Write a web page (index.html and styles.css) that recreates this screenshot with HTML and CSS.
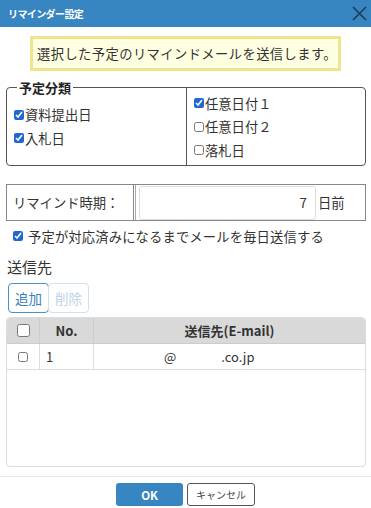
FILE: index.html
```html
<!DOCTYPE html>
<html lang="ja">
<head>
<meta charset="utf-8">
<title>リマインダー設定</title>
<link rel="stylesheet" href="styles.css">
</head>
<body>
<div class="dialog">
  <header class="titlebar">
    <span class="title">リマインダー設定</span>
    <svg class="close" width="15" height="15" viewBox="0 0 15 15"><path d="M1 1L14 14M14 1L1 14" stroke="#1b3a52" stroke-width="1.5" fill="none"/></svg>
  </header>
  <main class="content">
    <div class="notice">選択した予定のリマインドメールを送信します。</div>

    <fieldset class="category">
      <legend class="legend">予定分類</legend>
      <div class="cols">
        <div class="col col-left">
          <label class="opt"><input type="checkbox" class="cb" checked>資料提出日</label>
          <label class="opt"><input type="checkbox" class="cb" checked>入札日</label>
        </div>
        <div class="col col-right">
          <label class="opt"><input type="checkbox" class="cb" checked>任意日付１</label>
          <label class="opt"><input type="checkbox" class="cb">任意日付２</label>
          <label class="opt"><input type="checkbox" class="cb">落札日</label>
        </div>
      </div>
    </fieldset>

    <div class="remind">
      <div class="remind-label">リマインド時期：</div>
      <div class="remind-value">
        <div class="num-input">7</div>
        <span class="unit">日前</span>
      </div>
    </div>

    <label class="daily"><input type="checkbox" class="cb" checked>予定が対応済みになるまでメールを毎日送信する</label>

    <h3 class="section">送信先</h3>

    <div class="btns">
      <button class="tbtn">追加</button><button class="tbtn disabled">削除</button>
    </div>

    <div class="grid">
      <div class="grid-head">
        <div class="c c-check"><input type="checkbox" class="cb-big"></div>
        <div class="c c-no">No.</div>
        <div class="c c-mail">送信先(E-mail)</div>
      </div>
      <div class="grid-row">
        <div class="c c-check"><input type="checkbox" class="cb-row"></div>
        <div class="c c-no left">1</div>
        <div class="c c-mail mail"><span>@</span><span class="blank"></span><span>.co.jp</span></div>
      </div>
    </div>
  </main>
  <footer class="footer">
    <button class="btn-ok">OK</button>
    <button class="btn-cancel">キャンセル</button>
  </footer>
</div>
</body>
</html>
```

FILE: styles.css
```css
* { box-sizing: border-box; }
html, body { margin: 0; padding: 0; }
body {
  width: 371px;
  height: 508px;
  overflow: hidden;
  background: #fff;
  color: #333;
  font-family: "Noto Sans CJK JP", "Noto Sans", sans-serif;
}
.dialog { width: 371px; height: 508px; display: flex; flex-direction: column; }

.titlebar {
  height: 27px;
  background: #3886c1;
  display: flex;
  align-items: center;
  justify-content: space-between;
  padding: 0 4px 0 8px;
  color: #fff;
}
.title { font-size: 10px; font-weight: bold; letter-spacing: -0.6px; }
.close { display: block; }

.content { flex: 1; display: flex; flex-direction: column; }

.notice {
  margin: 9px auto 0;
  width: 311px;
  height: 35px;
  border: 3px solid #efe48e;
  background: #ffffe2;
  font-size: 13.3px;
  letter-spacing: 0.4px;
  display: flex;
  align-items: center;
  padding-left: 4px;
  color: #333;
}

.category {
  margin: 16px 5px 0 6px;
  padding: 0;
  border: 1px solid #555;
  border-radius: 4px;
  min-width: 0;
}
.legend {
  margin-left: 10px;
  padding: 0 2px;
  font-size: 13px;
  font-weight: bold;
  line-height: 1px;
  color: #222;
}
.cols { display: flex; height: 77px; }
.col { display: flex; flex-direction: column; justify-content: center; padding: 0 7px; }
.col-left { width: 180px; border-right: 1px solid #555; }
.col-right { flex: 1; }
.opt {
  display: flex;
  align-items: center;
  height: 23.5px;
  font-size: 13.3px;
  color: #333;
}
.cb {
  width: 10px;
  height: 10px;
  margin: 0 1px 0 0;
  accent-color: #1f68d1;
}

.remind {
  margin: 18px 5px 0 6px;
  height: 37px;
  border: 1px solid #888;
  display: flex;
}
.remind-label {
  width: 127px;
  border-right: 1px solid #888;
  display: flex;
  align-items: center;
  padding-left: 6px;
  font-size: 13.3px;
}
.remind-value {
  flex: 1;
  display: flex;
  align-items: center;
  padding: 0 0 0 3px;
  border-left: 1px solid #aaa;
  margin-left: 1px;
}
.num-input {
  width: 177px;
  height: 34px;
  border: 1px solid #ddd;
  border-radius: 3px;
  display: flex;
  align-items: center;
  justify-content: flex-end;
  padding-right: 8px;
  font-size: 13.3px;
}
.unit { margin-left: 2px; font-size: 13.3px; }

.daily {
  margin: 5px 0 0 13px;
  height: 20px;
  display: flex;
  align-items: center;
  font-size: 13.3px;
  letter-spacing: 0.15px;
}
.daily .cb { margin-right: 5px; }

.section {
  margin: 11px 0 0 7px;
  font-size: 15px;
  font-weight: normal;
  line-height: 20px;
  color: #333;
}

.btns { margin: 6px 0 0 8px; display: flex; }
.tbtn {
  height: 30px;
  width: 41px;
  padding: 0;
  background: #fff;
  border: 1px solid #4a8fc6;
  border-radius: 4px;
  color: #3a80bb;
  font-family: inherit;
  font-size: 13.5px;
}
.tbtn.disabled {
  border-color: #cfe2f1;
  color: #b9d2e6;
  margin-left: -1px;
}

.grid {
  margin: 4px 5px 0 6px;
  height: 150px;
  border: 1px solid #ddd;
  border-radius: 4px;
  overflow: hidden;
}
.grid-head {
  display: flex;
  height: 26px;
  background: #d9d9d9;
  border-bottom: 1px solid #ccc;
  font-weight: bold;
  font-size: 13px;
  color: #333;
}
.grid-row {
  display: flex;
  height: 26px;
  border-bottom: 1px solid #ddd;
  font-size: 13px;
}
.c { display: flex; align-items: center; justify-content: center; }
.c-check { width: 33px; border-right: 1px solid #ccc; }
.c-no { width: 54px; border-right: 1px solid #ccc; }
.grid-row .c-check, .grid-row .c-no { border-right-color: #ddd; }
.c-mail { flex: 1; }
.left { justify-content: flex-start; padding-left: 6px; }
.mail { justify-content: flex-start; padding-left: 70px; }
.blank { display: inline-block; width: 45px; }
.cb-big { width: 13px; height: 13px; margin: 0; }
.cb-row { width: 10px; height: 10px; margin: 0; }

.footer {
  margin-top: 9px;
  border-top: 1px solid #e6e6e6;
  height: 32px;
  display: flex;
  justify-content: center;
  align-items: flex-start;
  padding-top: 6px;
  gap: 4px;
}
.btn-ok {
  width: 67px;
  height: 23px;
  border: none;
  border-radius: 3px;
  background: #3886c1;
  color: #fff;
  font-family: inherit;
  font-size: 11.5px;
  font-weight: bold;
  padding: 0;
}
.btn-cancel {
  width: 68px;
  height: 23px;
  border: 1.5px solid #555;
  border-radius: 3px;
  background: #fff;
  color: #444;
  font-family: inherit;
  font-size: 10px;
  padding: 0;
}
```
